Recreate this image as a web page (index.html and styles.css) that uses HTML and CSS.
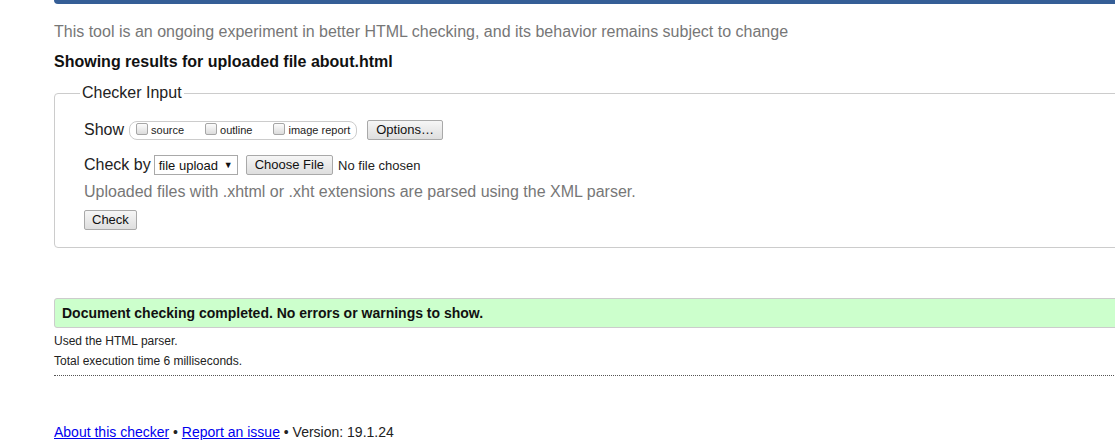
FILE: index.html
```html
<!DOCTYPE html>
<html>
<head>
<meta charset="utf-8">
<title>Nu Html Checker</title>
<link rel="stylesheet" href="styles.css">
</head>
<body>
<div class="page">
  <div class="topbar"></div>
  <p class="intro">This tool is an ongoing experiment in better HTML checking, and its behavior remains subject to change</p>
  <h2 class="showing">Showing results for uploaded file about.html</h2>
  <fieldset class="checker">
    <legend class="legend">Checker Input</legend>
    <div class="row show-row">
      <span class="row-label">Show</span>
      <span class="show-group">
        <label class="opt"><input type="checkbox" class="cb"><span>source</span></label>
        <label class="opt"><input type="checkbox" class="cb"><span>outline</span></label>
        <label class="opt"><input type="checkbox" class="cb"><span>image report</span></label>
      </span>
      <button class="btn options-btn" type="button">Options…</button>
    </div>
    <div class="row checkby-row">
      <span class="row-label">Check by</span>
      <span class="select">file upload <span class="arrow">▼</span></span>
      <button class="btn choose-btn" type="button">Choose File</button>
      <span class="nofile">No file chosen</span>
    </div>
    <p class="hint">Uploaded files with .xhtml or .xht extensions are parsed using the XML parser.</p>
    <button class="btn check-btn" type="button">Check</button>
  </fieldset>
  <div class="success">Document checking completed. No errors or warnings to show.</div>
  <p class="details">Used the HTML parser.</p>
  <p class="details">Total execution time 6 milliseconds.</p>
  <div class="dotted"></div>
  <p class="footer"><a href="#">About this checker</a> • <a href="#">Report an issue</a> • Version: 19.1.24</p>
</div>
</body>
</html>
```

FILE: styles.css
```css
html, body {
  margin: 0;
  padding: 0;
  overflow: hidden;
  background: #fff;
}
body {
  font-family: "Liberation Sans", Arial, sans-serif;
  color: #222;
}
.page {
  margin-left: 54px;
  width: 1120px;
}
.topbar {
  height: 4px;
  background: #355e96;
  border-bottom-left-radius: 7px;
}
.intro {
  margin: 18px 0 0;
  font-size: 16px;
  line-height: 20px;
  color: #777;
}
.showing {
  margin: 10px 0 0;
  font-size: 16px;
  line-height: 20px;
  font-weight: bold;
  color: #111;
}
.checker {
  margin: 12px 0 0;
  padding: 16px 28px 17px 29px;
  border: 1px solid #ccc;
  border-radius: 4px;
  min-width: 0;
}
.legend {
  margin-left: -4px;
  padding: 0 2px;
  font-size: 16px;
  line-height: 18px;
  color: #222;
}
.row {
  display: flex;
  align-items: center;
  height: 24px;
}
.row-label {
  font-size: 16px;
  color: #222;
}
.show-group {
  display: inline-flex;
  align-items: center;
  margin-left: 5px;
  height: 17px;
  padding: 0 6px 0 6px;
  border: 1px solid #ccc;
  border-radius: 8px;
}
.opt {
  display: inline-flex;
  align-items: center;
  font-size: 11px;
  color: #222;
  margin-right: 21px;
}
.opt:last-child {
  margin-right: 0;
}
.cb {
  appearance: none;
  -webkit-appearance: none;
  margin: 0 3px 3px 0;
  width: 12px;
  height: 12px;
  border: 1px solid #a6a6a6;
  border-radius: 2px;
  background: linear-gradient(#fcfcfc, #dcdcdc);
}
.btn {
  font-family: "Liberation Sans", Arial, sans-serif;
  font-size: 13px;
  color: #111;
  height: 20px;
  padding: 0 7px;
  border: 1px solid #a9a9a9;
  border-radius: 2px;
  background: linear-gradient(#f6f6f6, #dedede);
  line-height: 18px;
}
.options-btn {
  margin-left: 10px;
  padding: 0 8px;
}
.select {
  display: inline-flex;
  align-items: center;
  margin-left: 3px;
  height: 18px;
  padding: 0 4px 0 4px;
  border: 1px solid #a9a9a9;
  font-size: 13px;
  color: #111;
  width: 74px;
  justify-content: space-between;
}
.arrow {
  font-size: 9px;
}
.choose-btn {
  margin-left: 8px;
  padding: 0 8px;
}
.nofile {
  margin-left: 5px;
  font-size: 13px;
  color: #222;
}
.checkby-row {
  margin-top: 11px;
}
.hint {
  margin: 5px 0 0;
  font-size: 16px;
  line-height: 20px;
  color: #777;
}
.check-btn {
  display: block;
  margin-top: 8px;
}
.success {
  margin-top: 50px;
  height: 28px;
  line-height: 28px;
  padding-left: 7px;
  background: #ccffcc;
  border: 1px solid #ccc;
  border-radius: 3px;
  font-size: 14px;
  font-weight: bold;
  color: #111;
}
.details {
  margin: 5px 0 0;
  font-size: 12px;
  line-height: 16px;
  color: #222;
}
.details + .details {
  margin-top: 4px;
}
.dotted {
  margin-top: 6px;
  border-top: 1px dotted #555;
}
.footer {
  margin: 47px 0 0;
  font-size: 14px;
  line-height: 18px;
  color: #222;
}
.footer a {
  color: #00e;
}
```
